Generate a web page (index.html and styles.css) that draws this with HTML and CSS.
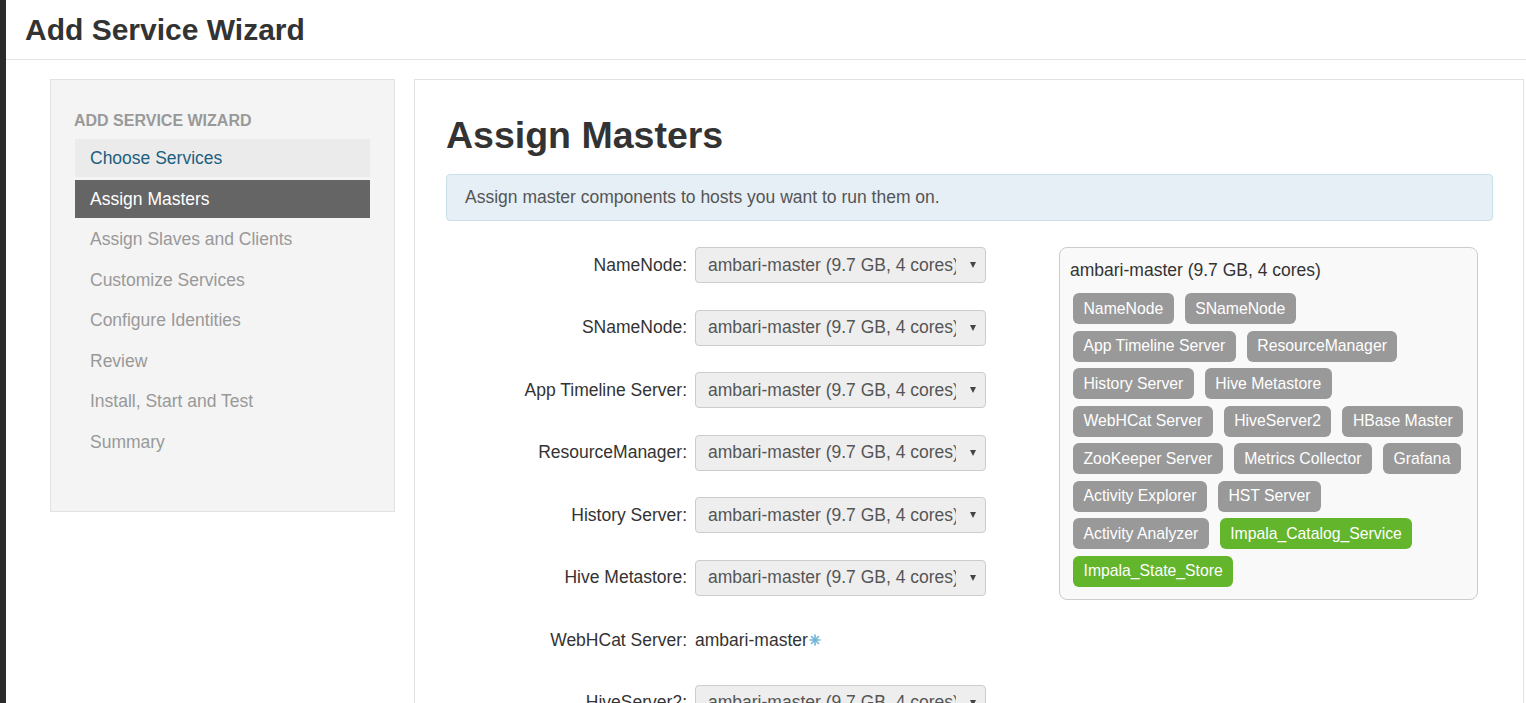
FILE: index.html
```html
<!DOCTYPE html>
<html lang="en">
<head>
    <meta charset="UTF-8">
    <title>Add Service Wizard</title>
    <link rel="stylesheet" href="styles.css">
</head>
<body>
    <div class="edge"></div>

    <div class="modal">
        <div class="modal-header">
            <h4>Add Service Wizard</h4>
        </div>

        <div class="modal-body">
            <div class="wizard-nav">
                <div class="nav-header">Add Service Wizard</div>
                <ul>
                    <li class="done">Choose Services</li>
                    <li class="active">Assign Masters</li>
                    <li>Assign Slaves and Clients</li>
                    <li>Customize Services</li>
                    <li>Configure Identities</li>
                    <li>Review</li>
                    <li>Install, Start and Test</li>
                    <li>Summary</li>
                </ul>
            </div>

            <div class="wizard-content">
                <h2>Assign Masters</h2>
                <div class="alert-info">Assign master components to hosts you want to run them on.</div>

                <div class="assign-body">
                    <div class="masters">
                        <div class="row">
                            <label>NameNode:</label>
                            <div class="select"><span>ambari-master (9.7 GB, 4 cores)</span><i class="caret"></i></div>
                        </div>
                        <div class="row">
                            <label>SNameNode:</label>
                            <div class="select"><span>ambari-master (9.7 GB, 4 cores)</span><i class="caret"></i></div>
                        </div>
                        <div class="row">
                            <label>App Timeline Server:</label>
                            <div class="select"><span>ambari-master (9.7 GB, 4 cores)</span><i class="caret"></i></div>
                        </div>
                        <div class="row">
                            <label>ResourceManager:</label>
                            <div class="select"><span>ambari-master (9.7 GB, 4 cores)</span><i class="caret"></i></div>
                        </div>
                        <div class="row">
                            <label>History Server:</label>
                            <div class="select"><span>ambari-master (9.7 GB, 4 cores)</span><i class="caret"></i></div>
                        </div>
                        <div class="row">
                            <label>Hive Metastore:</label>
                            <div class="select"><span>ambari-master (9.7 GB, 4 cores)</span><i class="caret"></i></div>
                        </div>
                        <div class="row">
                            <label>WebHCat Server:</label>
                            <div class="static">ambari-master<svg class="asterisk" width="12" height="12" viewBox="0 0 12 12"><g stroke="#6fb3d6" stroke-width="1.6" stroke-linecap="round"><line x1="6" y1="1" x2="6" y2="11"/><line x1="1" y1="6" x2="11" y2="6"/><line x1="2.5" y1="2.5" x2="9.5" y2="9.5"/><line x1="9.5" y1="2.5" x2="2.5" y2="9.5"/></g></svg></div>
                        </div>
                        <div class="row">
                            <label>HiveServer2:</label>
                            <div class="select"><span>ambari-master (9.7 GB, 4 cores)</span><i class="caret"></i></div>
                        </div>
                    </div>

                    <div class="host-box">
                        <div class="host-name">ambari-master (9.7 GB, 4 cores)</div>
                        <div class="labels">
                            <span class="label">NameNode</span>
                            <span class="label">SNameNode</span>
                            <span class="label">App Timeline Server</span>
                            <span class="label">ResourceManager</span>
                            <span class="label">History Server</span>
                            <span class="label">Hive Metastore</span>
                            <span class="label">WebHCat Server</span>
                            <span class="label">HiveServer2</span>
                            <span class="label">HBase Master</span>
                            <span class="label">ZooKeeper Server</span>
                            <span class="label">Metrics Collector</span>
                            <span class="label">Grafana</span>
                            <span class="label">Activity Explorer</span>
                            <span class="label">HST Server</span>
                            <span class="label">Activity Analyzer</span>
                            <span class="label new">Impala_Catalog_Service</span>
                            <span class="label new">Impala_State_Store</span>
                        </div>
                    </div>
                </div>
            </div>
        </div>
    </div>
</body>
</html>
```

FILE: styles.css
```css
html, body {
    height: 100%;
}
body {
    margin: 0;
    font-family: "Liberation Sans", Arial, sans-serif;
    font-size: 17.5px;
    line-height: 1.43;
    color: #333;
    background: #fff;
    display: flex;
    overflow: hidden;
}
.edge {
    width: 6px;
    flex-shrink: 0;
    background: #2b2b2b;
}
.modal {
    flex: 1;
    min-width: 0;
}
.modal-header {
    padding: 13px 19px 13px;
    border-bottom: 1px solid #e5e5e5;
}
.modal-header h4 {
    margin: 0;
    font-size: 30px;
    line-height: 1.1;
    font-weight: bold;
}
.modal-body {
    display: flex;
    align-items: flex-start;
    gap: 19px;
    padding: 19px 2px 0 44px;
}

/* left wizard steps */
.wizard-nav {
    width: 345px;
    box-sizing: border-box;
    background: #f4f4f4;
    border: 1px solid #e2e2e2;
    padding: 31px 24px 48px 23px;
}
.nav-header {
    font-size: 16px;
    line-height: 20px;
    font-weight: bold;
    text-transform: uppercase;
    color: #999;
    margin-bottom: 8px;
}
.wizard-nav ul {
    list-style: none;
    margin: 0 0 0 1px;
    padding: 0;
}
.wizard-nav li {
    padding: 9px 15px;
    line-height: 20px;
    margin-bottom: 2.5px;
    color: #999;
}
.wizard-nav li.done {
    background: #ebebeb;
    color: #1d5f80;
}
.wizard-nav li.active {
    background: #656565;
    color: #fff;
}

/* main content */
.wizard-content {
    flex: 1;
    min-height: 700px;
    border: 1px solid #e2e2e2;
    padding: 35px 30px 0 31px;
}
.wizard-content h2 {
    margin: 0 0 18px;
    font-size: 37.5px;
    line-height: 1.1;
    font-weight: bold;
}
.alert-info {
    background: #e5eff5;
    border: 1px solid #c9dfea;
    border-radius: 4px;
    padding: 10px 18px;
    color: #555;
    margin-bottom: 26px;
}
.assign-body {
    display: flex;
    align-items: flex-start;
}
.masters {
    width: 540px;
    margin-right: 73px;
}
.row {
    display: grid;
    grid-template-columns: 241px 291px;
    column-gap: 8px;
    align-items: center;
    height: 36px;
    margin-bottom: 26.5px;
}
.row label {
    text-align: right;
}
.select {
    display: flex;
    align-items: center;
    height: 36px;
    box-sizing: border-box;
    background: #eee;
    border: 1px solid #ccc;
    border-radius: 4px;
    padding: 0 0 0 12px;
    color: #555;
}
.select span {
    width: 248px;
    overflow: hidden;
    white-space: nowrap;
}
.caret {
    margin-left: 14px;
    width: 0;
    height: 0;
    border-left: 3.5px solid transparent;
    border-right: 3.5px solid transparent;
    border-top: 6px solid #444;
}
.static {
    display: flex;
    align-items: center;
}
.asterisk {
    margin-left: 1px;
}

/* host summary */
.host-box {
    width: 419px;
    box-sizing: border-box;
    background: #f9f9f9;
    border: 1px solid #ccc;
    border-radius: 8px;
    padding: 10px 10px 12px;
}
.host-name {
    margin-bottom: 10px;
}
.labels {
    display: flex;
    flex-wrap: wrap;
    gap: 6.5px 11px;
    margin-left: 3px;
}
.label {
    background: #999;
    color: #fff;
    font-size: 15.75px;
    line-height: 18px;
    padding: 6.5px 10.5px;
    border-radius: 6px;
}
.label.new {
    background: #63b52c;
}
```
